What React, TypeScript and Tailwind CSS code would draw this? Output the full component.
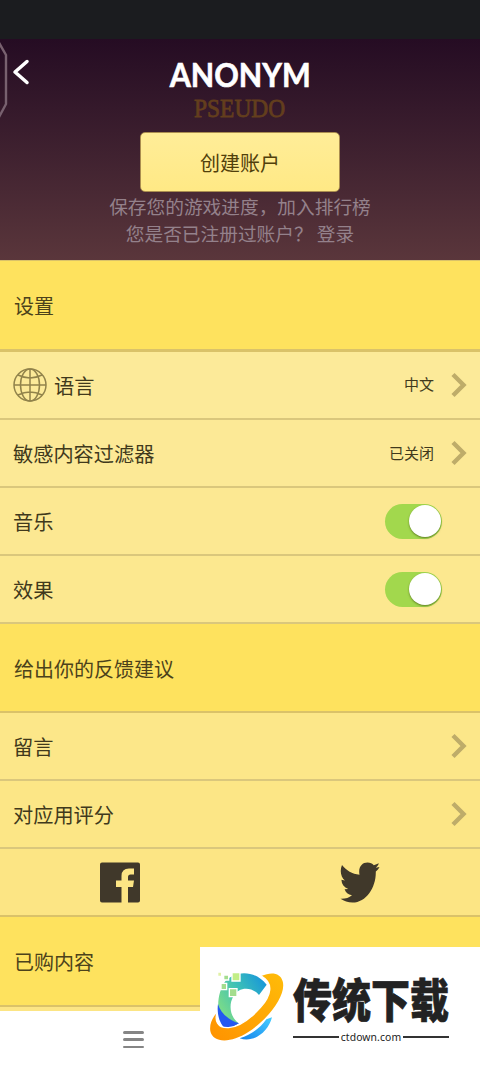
import type { ReactNode } from "react";

function Chevron() {
  return (
    <svg className="h-[26px] w-[18px] shrink-0" viewBox="0 0 18 26" fill="none" stroke="#beac69" strokeWidth="4.4">
      <path d="M3 2.5 L13.5 13 L3 23.5" />
    </svg>
  );
}

function Toggle() {
  return (
    <span className="mr-[26px] flex h-[35px] w-[57px] items-center justify-end rounded-full bg-[#a2d84d] pr-[1px]">
      <span className="h-8 w-8 rounded-full bg-white shadow-[0_1px_2px_rgba(70,90,20,0.7)]" />
    </span>
  );
}

function Row({ label, icon, children, bg }: { label: string; icon?: ReactNode; children?: ReactNode; bg: string }) {
  return (
    <div className={`flex h-[68.2px] shrink-0 items-center border-b-2 border-[#dac77c] pl-[13px] pr-[12px] ${bg}`}>
      {icon}
      <span className="pt-[2px] text-[20.2px] leading-[30px] text-[#40391c]">{label}</span>
      <div className="ml-auto flex items-center gap-[16px] text-[15px] text-[#40391c]">{children}</div>
    </div>
  );
}

function Section({ label, size }: { label: string; size: string }) {
  return (
    <div className={`flex shrink-0 items-center border-[#dac269] bg-[#fee25e] pl-[14px] ${size}`}>
      <span className="pt-[2px] text-[20px] leading-[30px] text-[#4c421b]">{label}</span>
    </div>
  );
}

function Globe() {
  return (
    <svg className="mr-[7px] h-[34px] w-[34px]" viewBox="0 0 34 34" fill="none" stroke="#91834b" strokeWidth="1.5">
      <circle cx="17" cy="17" r="16" />
      <ellipse cx="17" cy="17" rx="9.5" ry="16" />
      <path d="M17 1 V33 M1 17 H33 M5 7 Q17 13 29 7 M5 27 Q17 21 29 27" />
    </svg>
  );
}

function Facebook() {
  return (
    <svg className="h-[41px] w-[40px]" viewBox="0 0 40 41">
      <path
        fill="#40382a"
        d="M2 0.5 H38 Q40 0.5 40 2.5 V38.5 Q40 40.5 38 40.5 H28 V25 H33 L34 18.5 H28 V15 Q28 12.5 30.5 12.5 H34 V6.5 H29 Q21.5 6.5 21.5 14 V18.5 H16 V25 H21.5 V40.5 H2 Q0 40.5 0 38.5 V2.5 Q0 0.5 2 0.5Z"
      />
    </svg>
  );
}

function Twitter() {
  return (
    <svg className="h-[41px] w-[40px]" viewBox="0 0 40 41">
      <path
        fill="#40382a"
        d="M2 3 C6.5 8.5 12 12 19.5 12.8 C18 5 22 .5 27.5 .5 C30.2 .5 32.3 1.5 33.8 3.2 C35.6 2.9 37.3 2 38.8 1.3 C38.2 3.3 37.2 4.7 35.8 5.8 L39.5 5 C38.6 6.8 37.5 8.1 35.8 9.5 C36.2 25 26.5 40.5 12.5 40.5 C8 40.5 4 39.2 .5 36.8 C5.4 37 9 35.6 12 33.2 C8 32.7 5.7 30.5 4.6 27.3 L8.3 27 C4 25.4 1.7 22.2 1.4 17.7 L4.9 18.5 C1.1 15.4 -.6 9 2 3Z"
      />
    </svg>
  );
}

function SiteMark() {
  return (
    <svg className="h-[90px] w-[90px] shrink-0" viewBox="0 0 270 270">
      <defs>
        <linearGradient id="ring" x1="0" y1="1" x2="1" y2="0">
          <stop offset="0" stopColor="#ff9200" />
          <stop offset="1" stopColor="#ffbc09" />
        </linearGradient>
        <linearGradient id="arc" x1="0" y1=".7" x2="1" y2="0">
          <stop offset="0" stopColor="#82df83" />
          <stop offset=".5" stopColor="#3bbfb8" />
          <stop offset="1" stopColor="#118fe0" />
        </linearGradient>
        <linearGradient id="tail" x1="0" y1="1" x2="1" y2="0">
          <stop offset="0" stopColor="#1684ed" />
          <stop offset="1" stopColor="#45ceff" />
        </linearGradient>
      </defs>
      <path fill="url(#arc)" d="M77 62 C105 34 160 26 200 74 L177 105 C155 78 115 80 100 109 C83 140 94 174 116 190 L82 210 C48 177 45 105 77 62Z" />
      <path fill="#2458f0" d="M54 132 C60 156 83 179 117 190 L80 210 C57 193 50 160 54 132Z" />
      <path fill="url(#tail)" d="M119 235 C153 225 180 205 199 178 L216 172 C205 216 161 250 119 235Z" />
      <path
        fill="url(#ring)"
        d="M184 48 C214 35 241 38 248 64 C260 105 205 177 145 216 C92 251 38 249 31 213 C28 193 36 174 51 158 C44 180 51 205 86 203 C116 201 151 176 181 143 C214 106 222 69 184 48Z"
      />
      <path fill="none" stroke="white" strokeWidth="4" d="M51 158 C44 180 51 205 86 203 C116 201 151 176 181 143 C214 106 222 69 184 48" />
      <g stroke="white" strokeWidth="4">
        <path fill="#c2ee86" d="M96 38 H120 V63 H96Z" />
        <path fill="#a3dd8e" d="M88 86 H111 V110 H88Z M63 70 H80 V89 H63Z M71 45 H86 V60 H71Z" />
        <path fill="#e0f1a5" d="M53 36 H65 V49 H53Z" />
      </g>
    </svg>
  );
}

export default function App() {
  return (
    <main className="relative flex h-[1067px] w-[480px] flex-col overflow-hidden bg-white font-['Noto_Sans_CJK_SC',sans-serif]">
      <div className="h-[39px] shrink-0 bg-[#1b1c1f]" />
      <header className="relative flex h-[221px] shrink-0 flex-col items-center bg-linear-to-b from-[#250c23] to-[#5a363b]">
        <svg className="absolute left-0 top-0 h-[82px] w-[34px]" viewBox="0 0 34 82" fill="none">
          <path d="M-2 2 L6 16 V65 L-2 80" stroke="#78616f" strokeWidth="2.4" />
          <path d="M27 22.5 L15 33 L27 43.5" stroke="white" strokeWidth="3.5" strokeLinecap="round" strokeLinejoin="round" />
        </svg>
        <h1 className="mt-[17px] h-[39px] scale-x-[0.95] font-[Lato] text-[32px] font-bold leading-[38px] text-white [-webkit-text-stroke:0.6px_white]">ANONYM</h1>
        <div className="h-[37px] scale-x-[0.9] font-['Liberation_Serif'] text-[26px] leading-[28px] text-[#633e1d] [-webkit-text-stroke:0.8px_#633e1d]">PSEUDO</div>
        <button className="h-[60px] w-[200px] shrink-0 rounded-[5px] border border-[#aa8d50] bg-linear-to-b from-[#ffed98] to-[#ffe985] pt-[1px] text-[20px] text-[#51400b]">创建账户</button>
        <p className="text-[18.7px] leading-[27px] text-[#94818b]">保存您的游戏进度，加入排行榜</p>
        <p className="whitespace-pre text-[18.7px] leading-[27px] text-[#94818b]">您是否已注册过账户？ 登录</p>
      </header>

      <Section label="设置" size="h-[91.6px] border-t border-b-[3px]" />
      <Row label="语言" bg="bg-[#fcea99]" icon={<Globe />}>
        <span>中文</span>
        <Chevron />
      </Row>
      <Row label="敏感内容过滤器" bg="bg-[#fce996]">
        <span>已关闭</span>
        <Chevron />
      </Row>
      <Row label="音乐" bg="bg-[#fce892]"><Toggle /></Row>
      <Row label="效果" bg="bg-[#fce88f]"><Toggle /></Row>
      <Section label="给出你的反馈建议" size="h-[88.6px] border-b-2" />
      <Row label="留言" bg="bg-[#fce789]"><Chevron /></Row>
      <Row label="对应用评分" bg="bg-[#fce686]"><Chevron /></Row>
      <div className="grid h-[68px] shrink-0 grid-cols-2 place-items-center border-b-2 border-[#dac269] bg-[#fce584]">
        <Facebook />
        <Twitter />
      </div>
      <Section label="已购内容" size="h-[89.8px] border-b-2" />
      <div className="h-[4px] shrink-0 bg-[#fce584]" />
      <nav className="flex grow pl-[123px] pt-[20px]">
        <div className="flex h-[17px] w-[21px] flex-col justify-between">
          <span className="h-[2.5px] rounded-full bg-[#858585]" />
          <span className="h-[2.5px] rounded-full bg-[#858585]" />
          <span className="h-[2.5px] rounded-full bg-[#858585]" />
        </div>
      </nav>

      <aside className="absolute bottom-0 right-0 flex h-[120px] w-[280px] bg-white pt-[13px]">
        <SiteMark />
        <div className="flex w-[160px] flex-col items-center pl-[2px] pt-[14px]">
          <strong className="h-[55px] scale-y-[1.18] whitespace-nowrap text-[39px] font-black leading-[48px] text-[#222] [-webkit-text-stroke:0.6px_#222]">传统下载</strong>
          <div className="flex w-[156px] items-center gap-[2px] text-[#222]">
            <span className="h-[2.5px] grow bg-[#333]" />
            <span className="font-['Noto_Sans'] text-[10.4px] leading-[16px] tracking-[0.1px]">ctdown.com</span>
            <span className="h-[2.5px] grow bg-[#333]" />
          </div>
        </div>
      </aside>
    </main>
  );
}
